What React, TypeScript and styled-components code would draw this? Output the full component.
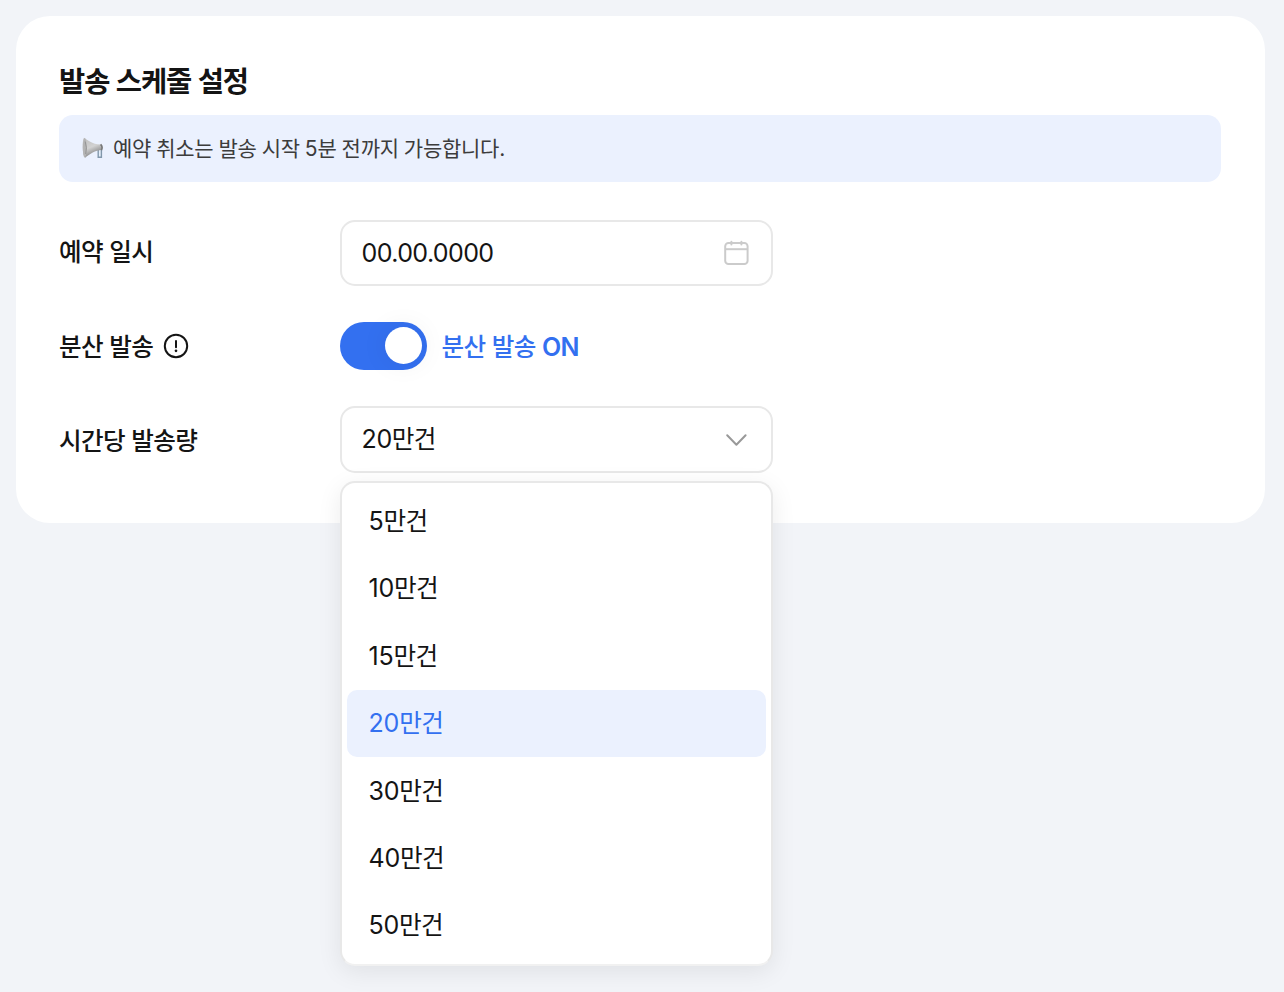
import React from "react";
import styled, { createGlobalStyle } from "styled-components";

const GlobalStyle = createGlobalStyle`
  * { box-sizing: border-box; }
  body {
    margin: 0;
    min-height: 992px;
    background: #f2f4f8;
    color: #141414;
    font-family: Inter, "Noto Sans CJK KR", sans-serif;
  }
`;

const Page = styled.main`
  padding: 16px 19px 16px 16px;
`;

const Card = styled.section`
  height: 506.5px;
  padding: 43px 44px 0 43px;
  border-radius: 34px;
  background: #fff;
`;

const Hangul = styled.span<{ $size: number; $track: number; $gap: number }>`
  font-family: "Noto Sans CJK KR", sans-serif;
  font-size: ${(p) => p.$size}px;
  letter-spacing: ${(p) => p.$track}px;
  word-spacing: ${(p) => p.$gap}px;
`;

const Latin = styled.span<{ $size: number; $track: number; $weight?: number }>`
  font-family: Inter, sans-serif;
  font-size: ${(p) => p.$size}px;
  font-weight: ${(p) => p.$weight ?? "inherit"};
  letter-spacing: ${(p) => p.$track}px;
`;

type TextProps = {
  children: string;
  size?: number;
  track?: number;
  gap?: number;
  latinSize?: number;
  latinTrack?: number;
  latinWeight?: number;
};

/* Sets Hangul and Latin runs in their own face and tracking. */
function Text({ children, size = 24.6, track = -0.6, gap = 1.2, latinSize = 25, latinTrack = -0.2, latinWeight }: TextProps) {
  const runs = children.match(/[가-힣\s]+|[^가-힣\s]+/g) ?? [];
  return (
    <span>
      {runs.map((run, i) =>
        /[가-힣\s]/.test(run) ? (
          <Hangul key={i} $size={size} $track={track} $gap={gap}>{run}</Hangul>
        ) : (
          <Latin key={i} $size={latinSize} $track={latinTrack} $weight={latinWeight}>{run}</Latin>
        )
      )}
    </span>
  );
}

const Title = styled.h1`
  margin: 0;
  height: 42px;
  line-height: 42px;
  font-weight: 700;
  white-space: pre;
`;

const Notice = styled.div`
  display: flex;
  align-items: center;
  gap: 9px;
  height: 67px;
  margin-top: 14px;
  padding-left: 23px;
  border-radius: 14px;
  background: #ebf1fe;
  color: #3c3c3c;
  line-height: 30px;
  white-space: pre;

  svg {
    margin-bottom: 2px;
  }
`;

const Form = styled.div`
  display: flex;
  flex-direction: column;
  margin-top: 38px;
`;

const Row = styled.div<{ $height: number; $after: number }>`
  display: flex;
  align-items: center;
  height: ${(p) => p.$height}px;
  margin-bottom: ${(p) => p.$after}px;
`;

const Label = styled.div<{ $drop?: number }>`
  display: flex;
  align-items: center;
  gap: 9.8px;
  width: 280.5px;
  height: 36px;
  line-height: 36px;
  font-weight: 500;
  white-space: pre;

  > span {
    padding-top: ${(p) => Math.max(p.$drop ?? 0, 0)}px;
    padding-bottom: ${(p) => Math.max(-(p.$drop ?? 0), 0)}px;
  }
`;

const FieldWrap = styled.div`
  position: relative;
  width: 433.5px;
`;

const Field = styled.button<{ $drop: number }>`
  display: flex;
  align-items: center;
  justify-content: space-between;
  width: 100%;
  height: 66.5px;
  padding: 0 22px 0 20px;
  border: 2px solid #e8e8e8;
  border-radius: 15px;
  background: #fff;
  color: #141414;
  line-height: 36px;

  > span {
    padding-top: ${(p) => p.$drop}px;
  }
`;

const Toggle = styled.button`
  display: flex;
  align-items: center;
  justify-content: flex-end;
  width: 87.5px;
  height: 47.5px;
  padding: 0 5px;
  border: 0;
  border-radius: 24px;
  background: #3370f0;
`;

const Knob = styled.span`
  width: 37px;
  height: 37px;
  border-radius: 50%;
  background: #fff;
  box-shadow: 0 0 28px rgba(0, 0, 0, 0.07);
`;

const ToggleLabel = styled.span`
  margin-left: 14.5px;
  height: 38px;
  line-height: 36px;
  color: #3370f0;
  font-weight: 500;
  white-space: pre;
`;

const Menu = styled.ul`
  position: absolute;
  top: 74.5px;
  left: 0;
  width: 433.5px;
  height: 485.5px;
  margin: 0;
  padding: 5px;
  list-style: none;
  border: 2px solid #e8e8e8;
  border-bottom-color: #f1f1f1;
  border-radius: 15px;
  background: #fff;
  box-shadow: 0 6px 24px rgba(0, 0, 0, 0.08);
`;

const Option = styled.li<{ $selected: boolean }>`
  display: flex;
  align-items: center;
  height: 67.4px;
  padding-left: 22px;
  border-radius: 10px;
  line-height: 36px;
  color: ${(p) => (p.$selected ? "#3370f0" : "#141414")};
  background: ${(p) => (p.$selected ? "#ebf1fe" : "transparent")};
`;

const Megaphone = () => (
  <svg width="22" height="22" viewBox="0 0 22 22" fill="none">
    <defs>
      <linearGradient id="horn" x1="4" y1="1" x2="12" y2="20" gradientUnits="userSpaceOnUse">
        <stop stopColor="#c0c0c0" />
        <stop offset=".5" stopColor="#d2d2d2" />
        <stop offset="1" stopColor="#777" />
      </linearGradient>
    </defs>
    <path d="M16.2 13v7.2h3.2v-8" fill="#e4eefa" stroke="#8197ab" strokeWidth="1.4" />
    <path d="M2 .8C6 3 9 7.2 19.4 7.6q1.7 2 .4 5.5C13 13.5 8 17 3.1 20.8 0 17 0 4 2 .8Z" fill="url(#horn)" />
    <ellipse cx="2.7" cy="10.8" rx="1.9" ry="9.7" fill="#b4b4b4" />
    <path d="M3.2 4.5q2.2 6 .5 12.5" stroke="#949494" strokeWidth="1" />
    <path d="M18.6 7.4q2.5 2.5.8 5.7" stroke="#777" strokeWidth="1.6" />
  </svg>
);

const InfoIcon = () => (
  <svg width="26" height="26" viewBox="0 0 26 26" fill="none" stroke="#141414">
    <circle cx="13" cy="13" r="11.2" strokeWidth="2" />
    <path d="M13 8v6.2" strokeWidth="2" strokeLinecap="round" />
    <circle cx="13" cy="17.8" r="1.35" fill="#141414" stroke="none" />
  </svg>
);

const CalendarIcon = () => (
  <svg width="26" height="26" viewBox="0 0 26 26" fill="none" stroke="#cbcbcb" strokeWidth="2">
    <rect x="2.2" y="3" width="22.4" height="21" rx="3.3" />
    <path d="M2.4 9.2h22" />
    <path d="M8.4 1.8v2.8M18.4 1.8v2.8" strokeLinecap="round" />
  </svg>
);

const Chevron = () => (
  <svg width="26" height="26" viewBox="0 0 26 26" fill="none" stroke="#999" strokeWidth="2" strokeLinecap="round" strokeLinejoin="round">
    <path d="m4.2 8.3 9.2 9.4 9.2-9.4" />
  </svg>
);

const options = ["5만건", "10만건", "15만건", "20만건", "30만건", "40만건", "50만건"];
const selected = "20만건";

export default function App() {
  return (
    <>
      <GlobalStyle />
      <Page>
        <Card>
          <Title><Text size={28.5} track={-1.05} gap={1}>발송 스케줄 설정</Text></Title>
          <Notice>
            <Megaphone />
            <Text size={21} track={-0.25} gap={0.6} latinSize={21}>예약 취소는 발송 시작 5분 전까지 가능합니다.</Text>
          </Notice>
          <Form>
            <Row $height={66} $after={36}>
              <Label $drop={-2}><Text>예약 일시</Text></Label>
              <FieldWrap>
                <Field $drop={4}><Text latinTrack={-0.6}>00.00.0000</Text><CalendarIcon /></Field>
              </FieldWrap>
            </Row>
            <Row $height={47.5} $after={36.5}>
              <Label $drop={3}><Text>분산 발송</Text><InfoIcon /></Label>
              <Toggle role="switch" aria-checked="true"><Knob /></Toggle>
              <ToggleLabel><Text latinWeight={600} latinTrack={-0.6}>분산 발송 ON</Text></ToggleLabel>
            </Row>
            <Row $height={67} $after={0}>
              <Label $drop={4}><Text>시간당 발송량</Text></Label>
              <FieldWrap>
                <Field $drop={2}><Text latinTrack={-0.35}>{selected}</Text><Chevron /></Field>
                <Menu>
                  {options.map((o) => (
                    <Option key={o} $selected={o === selected}><Text>{o}</Text></Option>
                  ))}
                </Menu>
              </FieldWrap>
            </Row>
          </Form>
        </Card>
      </Page>
    </>
  );
}
